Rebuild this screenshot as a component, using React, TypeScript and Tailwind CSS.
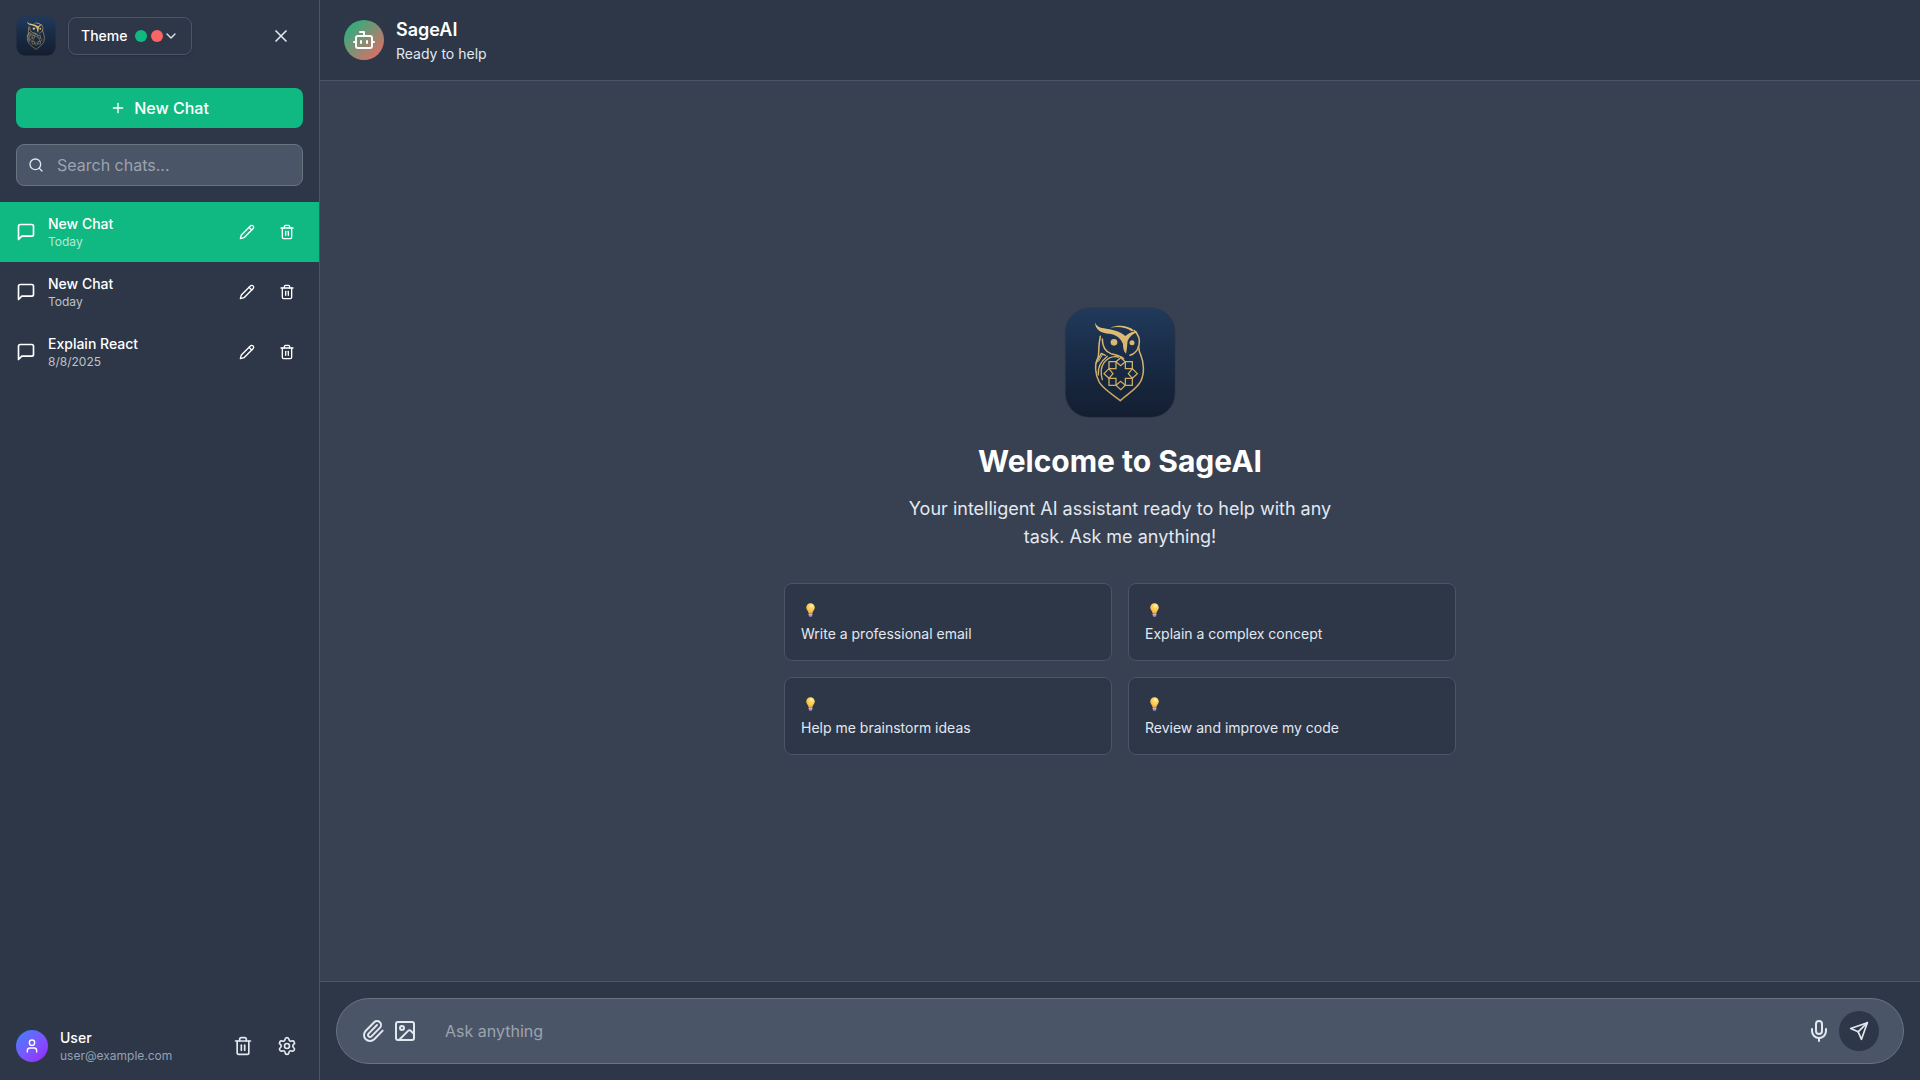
import React from "react";
import { Bot, ChevronDown, Image, Mic, Paperclip, Plus, Search, Settings, Trash2, User, X } from "lucide-react";

type StrokeProps = { size: number; className?: string; children: React.ReactNode };

function Stroke({ size, className, children }: StrokeProps) {
  return (
    <svg width={size} height={size} viewBox="0 0 24 24" fill="none" stroke="currentColor" strokeWidth="2" strokeLinecap="round" strokeLinejoin="round" className={className}>
      {children}
    </svg>
  );
}

const MessageIcon = () => (
  <Stroke size={20} className="shrink-0">
    <path d="M21 15a2 2 0 0 1-2 2H7l-4 4V5a2 2 0 0 1 2-2h14a2 2 0 0 1 2 2z" />
  </Stroke>
);

const PencilIcon = () => (
  <Stroke size={16}>
    <path d="M17 3a2.85 2.83 0 1 1 4 4L7.5 20.5 2 22l1.5-5.5Z" />
    <path d="m15 5 4 4" />
  </Stroke>
);

const SendIcon = () => (
  <Stroke size={20}>
    <path d="m22 2-7 20-4-9-9-4Z" />
    <path d="M22 2 11 13" />
  </Stroke>
);

function OwlLogo({ id, className }: { id: string; className: string }) {
  return (
    <svg viewBox="42 36 336 336" className={className}>
      <defs>
        <linearGradient id={id + "-bg"} x1="0" y1="0" x2="0" y2="1">
          <stop offset="0" stopColor="#213a5b" />
          <stop offset="0.5" stopColor="#182a44" />
          <stop offset="1" stopColor="#141e31" />
        </linearGradient>
        <linearGradient id={id + "-gold"} gradientUnits="userSpaceOnUse" x1="0" y1="80" x2="0" y2="320">
          <stop offset="0" stopColor="#dfc07a" />
          <stop offset="1" stopColor="#c8a45c" />
        </linearGradient>
      </defs>
      <rect x="46" y="39" width="329" height="328" rx="72" fill={`url(#${id}-bg)`} stroke="#2a3547" strokeWidth="2" />
      <g fill={`url(#${id}-gold)`}>
        <path d="M135 81 C138 94 150 99 169 101 C197 105 214 112 226 123 C238 112 250 107 263 110 C248 116 238 125 233 137 C231 147 232 159 228 176 C220 168 219 157 219 147 C213 131 200 119 178 116 C154 115 135 105 135 81 Z" />
        <path d="M181 98 C207 88 234 92 252 106 L245 109 C227 97 207 94 181 98 Z" />
        <circle cx="192" cy="142" r="10" />
        <circle cx="246" cy="143" r="7.5" />
      </g>
      <g fill="none" stroke={`url(#${id}-gold)`} strokeWidth="4.5" strokeLinecap="round" strokeLinejoin="round">
        <path d="M253 107 C268 121 270 137 267 151 C263 166 253 177 240 181" />
        <path d="M151 124 C143 158 149 178 143 190 C134 207 134 237 148 262 C162 284 192 301 211 317 C231 298 259 283 272 259 C284 235 282 203 272 179 C265 168 268 159 265 154" />
        <path d="M157 132 C157 154 167 170 183 176 C199 180 212 182 221 191" />
        <path d="M205 186 C188 182 172 190 162 203 C151 218 152 236 157 254" strokeWidth="4" />
        <path d="M138 205 L154 175 L166 181 M172 184 C153 200 143 214 145 240" strokeWidth="4" />
        <path d="M146 199 L158 178" strokeWidth="3" />
      </g>
      <g fill="none" stroke={`url(#${id}-gold)`} strokeWidth="3.8" strokeLinejoin="miter">
        <path d="M177 200 H198 V221 H177 Z M226 200 H247 V221 H226 Z M177 250 H198 V271 H177 Z M226 250 H247 V271 H226 Z" />
        <path d="M212 188 L226 200 L212 212 L198 200 Z M212 284 L226 271 L212 259 L198 271 Z" />
        <path d="M162 236 L177 221 L189 236 L177 250 Z M262 236 L247 221 L235 236 L247 250 Z" />
      </g>
    </svg>
  );
}

function Bulb({ id }: { id: string }) {
  return (
    <svg width="9" height="14" viewBox="0 0 9.6 14.6">
      <defs>
        <radialGradient id={id} cx="0.62" cy="0.25" r="0.75">
          <stop offset="0" stopColor="#fff3bd" />
          <stop offset="0.35" stopColor="#fed866" />
          <stop offset="1" stopColor="#fbae35" />
        </radialGradient>
      </defs>
      <path d="M4.8 .1A4.6 4.6 0 0 0 .2 4.7c0 2.7 2.4 3.4 2.7 6.3h3.8c.3-2.9 2.7-3.6 2.7-6.3A4.6 4.6 0 0 0 4.8 .1Z" fill={`url(#${id})`} />
      <path d="M2.9 10.8h3.8v2.4c0 .9-.6 1.3-1.9 1.3s-1.9-.4-1.9-1.3Z" fill="#a98bb5" />
      <path d="M2.9 12h3.8" stroke="#dccbe3" strokeWidth=".8" />
    </svg>
  );
}

const chats = [
  { title: "New Chat", date: "Today", active: true },
  { title: "New Chat", date: "Today", active: false },
  { title: "Explain React", date: "8/8/2025", active: false },
];

const prompts = ["Write a professional email", "Explain a complex concept", "Help me brainstorm ideas", "Review and improve my code"];

export default function App() {
  return (
    <div className="flex h-screen w-full overflow-hidden bg-[#374151] font-['Inter',sans-serif] text-white">
      <aside className="flex w-80 shrink-0 flex-col border-r border-[#4a5568] bg-[#2d3748]">
        <div className="flex h-[72px] items-center px-4">
          <OwlLogo id="owl-small" className="size-10" />
          <button className="ml-3 flex h-[38px] w-[124px] items-center rounded-lg border border-[#4a5568] pl-3 text-sm font-medium shadow-sm">
            Theme
            <span className="ml-2 size-3 rounded-full bg-[#10b981]" />
            <span className="ml-1 size-3 rounded-full bg-[#f96464]" />
            <ChevronDown size={16} className="text-[#e2e8f0]" />
          </button>
          <button className="ml-auto flex size-11 items-center justify-center text-[#e2e8f0]">
            <X size={20} />
          </button>
        </div>

        <div className="flex flex-col gap-4 p-4">
          <button className="flex h-10 items-center justify-center gap-2 rounded-lg bg-[#10b981] font-medium">
            <Plus size={16} />
            New Chat
          </button>
          <label className="flex h-[42px] items-center gap-[13px] rounded-lg border border-[#6b7280] bg-[#4a5568] pl-[11px] text-[#9ca3af]">
            <Search size={16} className="text-[#e2e8f0]" />
            <span>Search chats...</span>
          </label>
        </div>

        <nav className="flex flex-1 flex-col">
          {chats.map((chat, i) => (
            <div key={i} className={chat.active ? "flex h-15 items-center gap-3 bg-[#10b981] px-4" : "flex h-15 items-center gap-3 px-4"}>
              <MessageIcon />
              <div className="flex-1">
                <div className="text-sm font-medium">{chat.title}</div>
                <div className="text-xs text-white/70">{chat.date}</div>
              </div>
              <div className="flex gap-2">
                <button className="p-2"><PencilIcon /></button>
                <button className="p-2"><Trash2 size={16} /></button>
              </div>
            </div>
          ))}
        </nav>

        <div className="flex items-center gap-3 p-4">
          <div className="flex size-8 items-center justify-center rounded-full bg-linear-to-br from-blue-500 to-purple-600">
            <User size={16} />
          </div>
          <div className="flex-1">
            <div className="text-sm font-medium">User</div>
            <div className="text-xs text-[#94a0b2]">user@example.com</div>
          </div>
          <div className="flex gap-3 text-[#e2e8f0]">
            <button className="p-1.5"><Trash2 size={20} /></button>
            <button className="p-1.5"><Settings size={20} /></button>
          </div>
        </div>
      </aside>

      <main className="flex min-w-0 flex-1 flex-col">
        <header className="flex h-[81px] items-center gap-3 border-b border-[#4a5568] bg-[#2d3748] px-6">
          <div className="flex size-10 items-center justify-center rounded-full bg-linear-to-br/srgb from-[#10b981] to-[#f56565]">
            <Bot size={24} />
          </div>
          <div>
            <h1 className="text-lg font-semibold">SageAI</h1>
            <p className="text-sm text-[#e2e8f0]">Ready to help</p>
          </div>
        </header>

        <section className="flex flex-1 flex-col items-center justify-center">
          <OwlLogo id="owl-large" className="mb-6 size-28" />
          <h2 className="mb-4 text-3xl font-bold">Welcome to SageAI</h2>
          <p className="mb-8 w-[448px] text-center text-lg leading-7 text-[#e2e8f0]">
            Your intelligent AI assistant ready to help with any task. Ask me anything!
          </p>
          <div className="grid w-[672px] grid-cols-2 gap-4">
            {prompts.map((prompt, i) => (
              <button key={prompt} className="rounded-lg border border-[#4a5568] bg-[#2d3748] p-4 text-left text-sm text-[#e2e8f0]">
                <div className="flex h-6 items-start pl-[5px] pt-[3px]"><Bulb id={`bulb-${i}`} /></div>
                <div>{prompt}</div>
              </button>
            ))}
          </div>
        </section>

        <footer className="border-t border-[#4a5568] bg-[#2d3748] p-4">
          <div className="flex h-[66px] items-center rounded-full border border-[#6b7280] bg-[#4a5568] px-6 text-[#e2e8f0]">
            <Paperclip size={24} />
            <Image size={24} className="ml-2" />
            <span className="ml-7 flex-1 text-[#9ca3af]">Ask anything</span>
            <Mic size={24} />
            <button className="ml-2 flex size-10 items-center justify-center rounded-full bg-[#2d3748]">
              <SendIcon />
            </button>
          </div>
        </footer>
      </main>
    </div>
  );
}
